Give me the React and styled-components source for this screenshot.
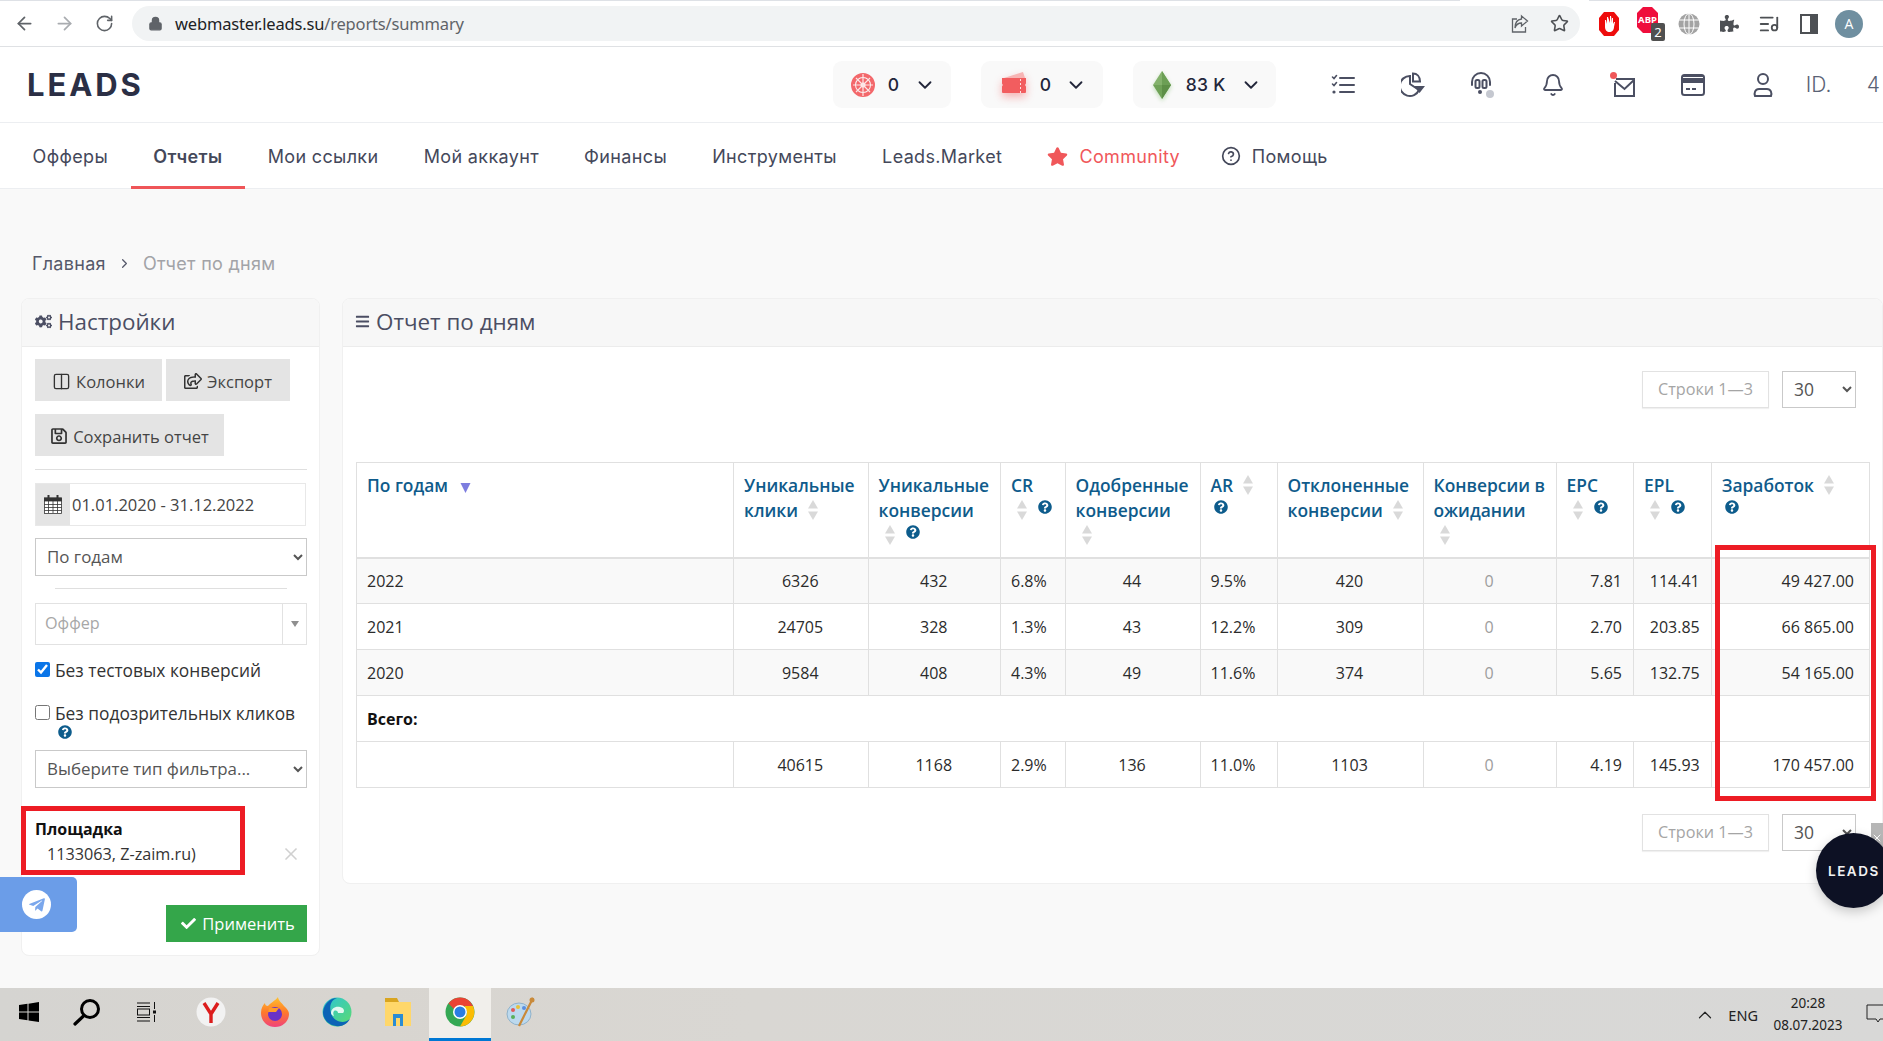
import React from "react";
import styled, { createGlobalStyle } from "styled-components";
import { ArrowLeft, ArrowRight, RotateCw, Lock, Star, ListMusic, ChevronDown, Bell, ChevronRight, CircleHelp, X, ChevronUp, Columns2 } from "lucide-react";
import { FaCogs, FaBars, FaRegShareSquare, FaRegSave, FaCheck, FaQuestionCircle, FaTelegramPlane, FaStar, FaPuzzlePiece } from "react-icons/fa";

const Global = createGlobalStyle`
  html, body { margin: 0; padding: 0; background: #f9f9f9; }
  * { box-sizing: border-box; }
  body { font-family: "Open Sans", "Noto Sans", sans-serif; }
`;

const Page = styled.div`
  position: relative; width: 1883px; height: 1041px; overflow: hidden;
  display: flex; flex-direction: column; background: #f9f9f9;
`;

/* ---------- browser chrome ---------- */
const BrowserBar = styled.div`
  height: 47px; flex: none; display: flex; align-items: center; background: #fff;
  border-bottom: 1px solid #dfe1e4; padding: 1px 0 0 4px;
  background-image: linear-gradient(90deg, #dee1e6 1460px, #fff 1460px, #fff 1589px, #dee1e6 1589px);
  background-size: 100% 1px; background-repeat: no-repeat;
`;
const NavCtl = styled.span`
  width: 40px; height: 40px; flex: none; display: flex; align-items: center; justify-content: center;
  color: ${p => p.$off ? "#a9acb0" : "#5f6368"};
`;
const UrlPill = styled.div`
  margin-left: 8px; width: 1448px; height: 35px; border-radius: 18px; background: #f1f3f4;
  display: flex; align-items: center; padding-left: 16px; flex: none;
`;
const UrlText = styled.div`
  margin-left: 12px; font-family: "Noto Sans", sans-serif; font-size: 16.5px; color: #202124; letter-spacing: -.17px;
  span { color: #5f6368; }
`;
const UrlActions = styled.div`
  margin-left: auto; margin-right: 11px; display: flex; align-items: center; gap: 19px; color: #5f6368;
  & > svg:first-child { margin-right: 1px; }
`;
const Extensions = styled.div`
  display: flex; margin-left: 9px; align-items: center;
`;
const Ext = styled.span`
  width: 40px; height: 40px; display: flex; align-items: center; justify-content: center; color: #4d5054;
`;
const Avatar = styled.span`
  width: 28px; height: 28px; border-radius: 50%; background: #6f8fa0; color: #fff; font-size: 14px;
  display: flex; align-items: center; justify-content: center;
`;

/* ---------- site header ---------- */
const Header = styled.header`
  height: 76px; flex: none; background: #fff; border-bottom: 1px solid #eceef1;
  display: flex; align-items: center; position: relative; padding-left: 27px; overflow: hidden;
`;
const Logo = styled.div`
  font-family: Inter, sans-serif; font-weight: 700; font-size: 31px; letter-spacing: 2.9px; color: #2b2f45; line-height: 1;
`;
const Pill = styled.div`
  height: 47px; width: ${p => p.$w}px; margin-left: ${p => p.$ml}px; border-radius: 9px; background: #f9f9f9; flex: none;
  display: flex; align-items: center; padding-left: ${p => p.$pl}px;
  font-family: Inter, sans-serif; font-size: 17.5px; font-weight: 500; color: #22263a; letter-spacing: .3px;
`;
const PillValue = styled.span`
  margin: 0 ${p => p.$gap}px 0 ${p => p.$left}px; white-space: nowrap;
`;
const IconRow = styled.div`
  display: flex; margin-left: 32px; flex: none; color: #4b4f62;
`;
const HeaderIcon = styled.span`
  width: 70px; height: 40px; display: flex; align-items: center; justify-content: center;
`;
const UserId = styled.div`
  margin-left: 8px; font-family: Inter, sans-serif; font-size: 21px; font-weight: 300; color: #5a6275; white-space: nowrap; flex: none;
`;

/* ---------- site navigation ---------- */
const SiteNav = styled.nav`
  height: 66px; flex: none; background: #fff; border-bottom: 1px solid #eceef1;
  display: flex; padding-left: 10px;
  font-family: Inter, sans-serif; font-size: 18px; color: #44485a;
`;
const Tab = styled.a`
  height: 66px; padding: 3px ${p => p.$pad || 22.6}px 0; display: flex; align-items: center; gap: 11px; white-space: nowrap; letter-spacing: .35px;
  color: ${p => p.$accent ? "#f0575a" : "#44485a"};
  font-weight: ${p => p.$active ? 600 : 400};
  border-bottom: 3px solid ${p => p.$active ? "#ef5558" : "transparent"};
`;

/* ---------- breadcrumb ---------- */
const Crumbs = styled.div`
  flex: none; height: 24px; margin: 62px 0 23px 32px; display: flex; align-items: center; gap: 11px;
  font-family: Inter, sans-serif; font-size: 18px; letter-spacing: .3px; color: #55586a;
`;
const CrumbHere = styled.span` color: #a2a3a7; `;

/* ---------- cards ---------- */
const Content = styled.div`
  display: flex; gap: 22px; align-items: flex-start; padding-left: 21px; flex: none;
`;
const Card = styled.section`
  background: #fff; border: 1px solid #f0f0f0; border-radius: 8px; overflow: hidden;
  ${p => p.$w ? `width: ${p.$w}px; flex: none;` : "flex: 1;"}
`;
const CardHead = styled.div`
  height: 48px; background: #f7f7f7; border-bottom: 1px solid #ececec;
  display: flex; align-items: center; padding: 0 0 2px ${p => p.$pl}px; gap: 6px;
  font-size: 22.4px; color: #4b4e63;
  svg { font-size: ${p => p.$ic}px; }
`;
const SideBody = styled.div` padding: 12px 12px 13px 13px; `;
const BtnRow = styled.div` display: flex; gap: 4px; margin-bottom: 13px; `;
const GreyBtn = styled.button`
  height: 42px; border: 0; background: #e4e4e4; color: #444; padding: 2px 0 0;
  display: flex; align-items: center; gap: 5px; font: 16.5px "Open Sans", sans-serif; width: ${p => p.$w}px;
  justify-content: center; flex: none;
  svg { font-size: 18px; color: #333; }
`;
const Rule = styled.hr`
  border: 0; height: 1px; background: #dfdfdf; margin: ${p => p.$mt || 0}px ${p => p.$inset || 0}px ${p => p.$mb}px;
`;
const DateField = styled.div`
  height: 43px; width: 271px; border: 1px solid #e8e8e8; display: flex; align-items: center;
  margin-bottom: 12px; font-size: 16.5px; color: #444;
`;
const DateAddon = styled.span`
  width: 34px; height: 100%; background: #e4e4e4; display: flex; align-items: center; justify-content: center; margin-right: 2px;
`;
const NativeSelect = styled.select`
  display: block; width: ${p => p.$w || 272}px; height: ${p => p.$h || 38}px; border: 1.5px solid #c9c9c9; background: #fff; color: #555;
  font: ${p => p.$fs || 16.9}px "Open Sans", sans-serif; padding: 0 0 2px 7px; border-radius: 0; outline: 0; margin-top: ${p => p.$mt || 0}px;
`;
const ComboBox = styled.div`
  height: 42px; border: 1px solid #e2e2e2; display: flex; color: #a7a7a7; font-size: 16.2px; align-items: center;
  padding-left: 9px;
`;
const ComboText = styled.span` margin-top: -2px; `;
const ComboCaret = styled.span`
  margin-left: auto; width: 24px; height: 100%; border-left: 1px solid #e2e2e2; display: flex; align-items: center; justify-content: center;
  &::after { content: ""; border: 4.5px solid transparent; border-top: 6px solid #8f8f8f; border-bottom: 0; }
`;
const CheckLine = styled.label`
  display: flex; gap: 5px; align-items: flex-start; font-size: 17.35px; line-height: 24px; color: #333; white-space: nowrap;
  margin-top: ${p => p.$mt}px; min-height: 24px;
  input { width: 15px; height: 15px; margin: 4px 0 0; accent-color: #0a75e8; flex: none; }
`;
const HelpMark = styled(FaQuestionCircle)`
  color: #0d5c8c; font-size: 14px; display: inline-block;
`;
const HelpLine = styled.span` display: block; height: 12px; margin-left: 23px; line-height: 12px; `;
const FilterTitle = styled.div` margin-top: 29px; font-size: 16px; font-weight: 700; color: #111; line-height: 24px; `;
const FilterRow = styled.div`
  display: flex; justify-content: space-between; align-items: center; padding: 1px 6px 0 12px; line-height: 24px; font-size: 16.2px; color: #333;
`;
const FilterClear = styled(X)` color: #d0d0d0; `;
const ApplyRow = styled.div` display: flex; justify-content: flex-end; margin-top: 39px; `;
const ApplyBtn = styled.button`
  width: 141px; height: 37px; border: 0; background: #34a64a; color: #fff; font: 16.5px "Open Sans", sans-serif;
  display: flex; align-items: center; justify-content: center; gap: 6px; padding: 0 0 0 3px;
`;

/* ---------- report ---------- */
const ReportBody = styled.div` padding: 24px 13px 32px 13px; `;
const Pager = styled.div`
  display: flex; justify-content: flex-end; gap: 13px; padding-right: 13px; margin: ${p => p.$mt || 0}px 0 ${p => p.$mb || 0}px;
`;
const RowsInfo = styled.div`
  width: 127px; height: 37px; border: 1px solid #e2e2e2; box-shadow: 0 1px 1px rgba(0,0,0,.06);
  display: flex; align-items: center; justify-content: center; color: #a5a5a5; font-size: 16.2px; padding-bottom: 2px;
`;
const Table = styled.table`
  width: 1513px; table-layout: fixed; border-collapse: collapse; font-size: 16px; color: #2b2b2b;
`;
const Th = styled.th`
  height: 95px; vertical-align: top; text-align: left; padding: 10px 0 0 10px; border: 1px solid #e0e0e0; border-bottom-width: 2px;
  font-weight: 600; line-height: 25px; color: #0f5b8b; font-size: 17.4px; white-space: nowrap;
`;
const Td = styled.td`
  height: 46px; padding: 0 ${p => p.$pr || 11}px 0 10px; border: 1px solid #e0e0e0;
  text-align: ${p => p.$a || "center"}; color: ${p => p.$muted ? "#9d9d9d" : "#2b2b2b"};
  ${p => p.$strong && "font-weight: 700; color: #111;"}
`;
const Tr = styled.tr` background: ${p => p.$zebra ? "#f9f9f9" : "#fff"}; `;
const SortIcon = styled.svg`
  display: inline-block; vertical-align: -3px; margin-left: ${p => p.$ml ?? 9}px; 
`;
const ThHelp = styled(HelpMark)`
  vertical-align: 3px; margin-left: ${p => p.$ml ?? 10}px; 
`;

/* ---------- overlays ---------- */
const RedBox = styled.div`
  position: absolute; border: 5px solid #ed1c24; pointer-events: none;
  left: ${p => p.$x}px; top: ${p => p.$y}px; width: ${p => p.$w}px; height: ${p => p.$h}px;
`;
const TelegramTab = styled.div`
  position: absolute; left: 0; top: 877px; width: 77px; height: 55px; background: #6b9de8; border-radius: 0 5px 5px 0;
  display: flex; align-items: center; justify-content: center; padding-right: 4px;
`;
const TelegramDisc = styled.span`
  width: 29px; height: 29px; border-radius: 50%; background: #fff; color: #7ba7ec; display: flex; align-items: center; justify-content: center; font-size: 18px;
`;
const ChatClose = styled.div`
  position: absolute; left: 1871px; top: 823px; width: 12px; height: 30px; background: #b6b6b6; color: #fff;
  display: flex; align-items: center; justify-content: center; overflow: hidden;
`;
const ChatBubble = styled.div`
  position: absolute; left: 1816px; top: 833px; width: 75px; height: 75px; border-radius: 50%; background: #0d1124;
  color: #f1f1f1; font-family: Inter, sans-serif; font-weight: 600; font-size: 13.5px; letter-spacing: 1.5px;
  display: flex; align-items: center; padding-left: 12px; box-shadow: 0 4px 12px rgba(0,0,0,.2);
`;

/* ---------- windows taskbar ---------- */
const Taskbar = styled.footer`
  margin-top: auto; height: 53px; flex: none; display: flex; align-items: center;
  background: linear-gradient(90deg, #d5d4d1 0%, #d8d5d0 20%, #d9d7d3 40%, #d8d8d7 100%);
`;
const TaskItem = styled.span`
  width: ${p => p.$w || 61.5}px; height: 53px; flex: none; display: flex; align-items: center; justify-content: center;
  padding: 0 ${p => p.$pr || 0}px 5px 0;
  ${p => p.$on && "background: #f1efeb; border-bottom: 3px solid #0078d4; padding-bottom: 2px;"}
`;
const Tray = styled.div`
  margin-left: auto; display: flex; align-items: center; font-family: "Noto Sans", sans-serif; font-size: 14px; color: #222;
`;
const Lang = styled.span` margin: 0 14px 0 12px; font-size: 14.5px; `;
const Clock = styled.div` width: 72px; text-align: center; font-size: 13.5px; line-height: 22px; margin: 0 22px 2px 0; `;
const Notice = styled.svg` margin: 0 -7px 2px 0; `;

/* ---------- drawings ---------- */
const Sort = ({ ml }) => (
  <SortIcon $ml={ml} width="12" height="20" viewBox="0 0 12 20">
    <path d="M6 0l5 8.500H1z" fill="#d9d9d9" /><path d="M6 20l-5-8.500h10z" fill="#d9d9d9" />
  </SortIcon>
);
const DownMark = () => (
  <SortIcon $ml={12} width="11" height="10" viewBox="0 0 11 10" style={{ verticalAlign: -1 }}>
    <path d="M5.500 10L.5 0h10z" fill="#7d7ddf" />
  </SortIcon>
);
const CalendarGlyph = () => (
  <svg width="18" height="19" viewBox="0 0 18 19" fill="none" stroke="#333" strokeWidth=".8">
    <rect x=".5" y="3" width="17" height="15.500" fill="#fff" stroke="#333" />
    <rect x=".5" y="3" width="17" height="3" fill="#333" />
    <path d="M.5 9.500h17M.5 12.500h17M.5 15.500h17M4.500 6v12M9 6v12M13.500 6v12" />
    <path d="M4.500 0v4M13.500 0v4" strokeWidth="2" stroke="#333" />
  </svg>
);
const ShareGlyph = () => (
  <svg width="20" height="20" viewBox="0 0 20 20" fill="none" stroke="#5f6368" strokeWidth="1.3">
    <path d="M7 5H2.500v13h13v-5" /><path d="M11.500 2l6 5-6 5V9C8 9 6 11 5 14c0-5 2.500-8.500 6.500-9z" />
  </svg>
);
const OperaStop = () => (
  <svg width="22" height="26" viewBox="0 0 22 26">
    <path d="M6 1h10l5 6v12l-5 6H6l-5-6V7z" fill="#ee0c0c" />
    <path d="M7 9v7c0 3 2 5 4.500 5S16 19 16 16l1-5h-1l-1 2V7h-1v5l-1-7h-1v7L10 6H9v7L8 9z" fill="#fff" />
  </svg>
);
const AbpMark = () => (
  <svg width="34" height="36" viewBox="-4 0 34 36">
    <path d="M7 1h9l6 6v14l-6 6H7l-6-6V7z" fill="#ef0e3c" />
    <text x="11.500" y="17" textAnchor="middle" fontSize="9.500" fontWeight="700" fill="#fff" fontFamily="Noto Sans">ABP</text>
    <rect x="15" y="17" width="14" height="18" rx="2" fill="#505050" />
    <text x="22" y="31" textAnchor="middle" fontSize="13" fill="#fff" fontFamily="Noto Sans">2</text>
  </svg>
);
const GlobeMark = () => (
  <svg width="22" height="24" viewBox="0 0 22 24" fill="none" stroke="#fff" strokeWidth="1">
    <circle cx="11" cy="12" r="10.500" fill="#a3a3a3" stroke="none" />
    <ellipse cx="11" cy="12" rx="5" ry="10.500" /><path d="M11 1.500v21M1 8h20M1 16h20" />
  </svg>
);
const PanelMark = () => (
  <svg width="18" height="20" viewBox="0 0 18 20"><rect x="0" y="0" width="18" height="20" fill="#4d5054" /><rect x="2" y="2" width="8" height="16" fill="#fff" /></svg>
);
const WheelIcon = () => (
  <svg width="24" height="26" viewBox="0 0 24 26" fill="none">
    <circle cx="12" cy="13" r="10" stroke="#f3686b" strokeWidth="4" />
    <circle cx="12" cy="13" r="7" fill="#f3686b" />
    <circle cx="12" cy="13" r="2.500" fill="#fff" />
    <path d="M12 2v22M2 13h20M5 6l14 14M19 6L5 20" stroke="#fde5e5" strokeWidth="1.200" />
  </svg>
);
const TicketIcon = () => (
  <svg width="32" height="36" viewBox="0 0 32 36" style={{ filter: "drop-shadow(0 4px 4px rgba(242,93,95,.45))" }}>
    <path d="M6 11L25 5l2 6z" fill="#f7b4b4" />
    <path d="M4 11h24v5.500a2 2 0 0 0 0 3V25a1 1 0 0 1-1 1H5a1 1 0 0 1-1-1v-5.500a2 2 0 0 0 0-3z" fill="#f25d5f" />
    <path d="M22.500 12v14" stroke="#fde0e0" strokeWidth="1" strokeDasharray="2 2" />
  </svg>
);
const GemIcon = () => (
  <svg width="20" height="30" viewBox="0 0 20 30" style={{ filter: "drop-shadow(0 2px 2px rgba(108,180,85,.4))" }}>
    <path d="M10 1L1 15h18z" fill="#84b26c" /><path d="M10 1v14h9z" fill="#6c9f55" />
    <path d="M10 29L1 15h18z" fill="#6fa257" /><path d="M10 29V15h9z" fill="#5d8f47" />
  </svg>
);
const ChecklistIcon = () => (
  <svg width="24" height="22" viewBox="0 0 24 22" fill="none" stroke="#4b4f62" strokeWidth="2" strokeLinecap="round">
    <path d="M9 4h14M9 11h14M9 18h14" /><path d="M1.500 3l1.500 1.500L5.500 1.500M1.500 10l1.500 1.500 2.500-3" strokeWidth="1.600" />
    <circle cx="3" cy="18" r="1.600" fill="#4b4f62" stroke="none" />
  </svg>
);
const PieIcon = () => (
  <svg width="24" height="26" viewBox="0 0 24 26" fill="none" stroke="#4b4f62" strokeWidth="2">
    <path d="M9 4a10 10 0 1 0 9 14l-9-6z" /><path d="M12 1.500c4 0 7 3 7 8h-7z" />
    <path d="M13 14h11l-5.500 7z" fill="#4b4f62" stroke="none" />
  </svg>
);
const HeadsetIcon = () => (
  <svg width="28" height="30" viewBox="0 0 28 30" fill="none" stroke="#4b4f62" strokeWidth="2" strokeLinecap="round">
    <path d="M3 15v-3a9 9 0 0 1 18 0v3" />
    <rect x="6.500" y="10" width="4" height="8" rx="1.500" /><rect x="13.500" y="10" width="4" height="8" rx="1.500" />
    <circle cx="11" cy="22" r="2" fill="#4b4f62" stroke="none" />
    <circle cx="21" cy="24" r="4" fill="#c5c8d0" stroke="none" />
  </svg>
);
const MailDotIcon = () => (
  <svg width="26" height="28" viewBox="0 0 26 28" fill="none" stroke="#4b4f62" strokeWidth="2">
    <path d="M6 8h18v17H5V12" /><path d="M5 10l9.500 8L24 9" />
    <circle cx="3.500" cy="4.500" r="3.500" fill="#f0575a" stroke="none" />
  </svg>
);
const CardIcon = () => (
  <svg width="24" height="22" viewBox="0 0 24 22">
    <rect x="1" y="1" width="22" height="20" rx="2.500" fill="none" stroke="#4b4f62" strokeWidth="2" />
    <rect x="1" y="4" width="22" height="5" fill="#4b4f62" /><rect x="1" y="1" width="22" height="2" fill="#4b4f62" />
    <rect x="5" y="14" width="4" height="2" fill="#4b4f62" /><rect x="11" y="14" width="4" height="2" fill="#4b4f62" />
  </svg>
);
const PersonIcon = () => (
  <svg width="22" height="26" viewBox="0 0 22 26" fill="none" stroke="#4b4f62" strokeWidth="2">
    <circle cx="11" cy="7" r="5" /><path d="M3 24h16c1-3 0-7-4-7H7c-4 0-5 4-4 7z" />
  </svg>
);
const WinLogo = () => (
  <svg width="20" height="20" viewBox="0 0 20 20" fill="#000"><path d="M0 3l8.500-1.200V9.500H0zM9.500 1.700L20 0v9.500H9.500zM0 10.500h8.500v7.700L0 17zM9.500 10.500H20V20L9.500 18.400z" /></svg>
);
const SearchGlyph = () => (
  <svg width="28" height="28" viewBox="0 0 28 28" fill="none" stroke="#000"><circle cx="17" cy="11" r="8.500" strokeWidth="3" /><path d="M11 17.500L2 26" strokeWidth="3.200" strokeLinecap="round" /></svg>
);
const TaskViewGlyph = () => (
  <svg width="20" height="20" viewBox="0 0 20 20" fill="none" stroke="#111"><path d="M0 1h13M0 4.500h13M0 15.500h13M0 19h13" /><rect x=".5" y="7" width="12" height="6" /><path d="M17.500 0v7M17.500 13v7" /><rect x="16" y="8.500" width="3" height="3" fill="#111" stroke="none" /></svg>
);
const YandexGlyph = () => (
  <svg width="30" height="30" viewBox="0 0 30 30"><circle cx="15" cy="15" r="14.500" fill="#f2f2f2" /><path d="M8 6l7 11v9M22 6l-7 11" stroke="#dc1c1c" strokeWidth="3.400" fill="none" /></svg>
);
const FoxGlyph = () => (
  <svg width="30" height="32" viewBox="0 0 30 32">
    <defs><linearGradient id="fx" x1="0" y1="0" x2="0" y2="1"><stop offset="0" stopColor="#ffc22e" /><stop offset=".5" stopColor="#ff7a2a" /><stop offset="1" stopColor="#f0427c" /></linearGradient></defs>
    <path d="M15 31C7 31 1 25 1 17c0-5 2-8 4-10 0 2 1 3 3 3 2-3 7-5 10-9 0 3 3 5 6 9 3 3 5 5 5 8 0 7-6 13-14 13z" fill="url(#fx)" />
    <circle cx="15" cy="18" r="7" fill="#6a32c8" /><path d="M9 12h10l-3 4H8z" fill="#ff9a2a" />
  </svg>
);
const EdgeGlyph = () => (
  <svg width="30" height="30" viewBox="0 0 30 30">
    <defs><linearGradient id="eg" x1="0" y1="0" x2="1" y2="1"><stop offset="0" stopColor="#2bc4d8" /><stop offset="1" stopColor="#5ddb6e" /></linearGradient></defs>
    <circle cx="15" cy="15" r="14.500" fill="url(#eg)" />
    <path d="M1 15C2 7 8 1 15 1c-6 2-8 8-6 15 2 8 12 12 19 6-3 5-8 8-14 7C7 28 1 23 1 15z" fill="#0c63b6" />
    <path d="M9 16c0-4 4-7 9-6 4 1 5 4 3 6h-5c0-2-2-3-4-2-1 1-1 3 0 5-2-.5-3-2-3-3z" fill="#fff" opacity=".85" />
  </svg>
);
const FolderGlyph = () => (
  <svg width="28" height="30" viewBox="0 0 28 30">
    <path d="M1 1h12l2 4H1z" fill="#d9a520" /><rect x="1" y="5" width="26" height="24" fill="#ffd76a" />
    <path d="M9 29V17h10v12h-3v-8h-4v8z" fill="#2a8cd4" />
  </svg>
);
const ChromeGlyph = () => (
  <svg width="30" height="30" viewBox="0 0 30 30">
    <circle cx="15" cy="15" r="14.500" fill="#34a853" />
    <path d="M15 .5A14.500 14.500 0 0 1 28 9H15a6 6 0 0 0-5.500 3.500L3.500 6.500A14.500 14.500 0 0 1 15 .5z" fill="#ea4335" />
    <path d="M28 9a14.500 14.500 0 0 1-13 20.500L21 19a6 6 0 0 0-1-7.500V9z" fill="#fbbc04" />
    <circle cx="15" cy="15" r="7" fill="#fff" /><circle cx="15" cy="15" r="5.500" fill="#2a7de1" />
  </svg>
);
const PaintGlyph = () => (
  <svg width="30" height="32" viewBox="0 0 30 32">
    <ellipse cx="13" cy="18" rx="12" ry="11" fill="#bcd9ee" stroke="#8fb2cb" />
    <circle cx="7" cy="14" r="2" fill="#e05a5a" /><circle cx="12" cy="11" r="2" fill="#e8c23a" /><circle cx="7" cy="21" r="2" fill="#58b05a" /><circle cx="18" cy="12" r="2" fill="#5a8ee0" />
    <path d="M27 2L13 30" stroke="#c98a3a" strokeWidth="2.200" /><circle cx="26" cy="4" r="2.500" fill="#c98a3a" />
  </svg>
);

const rows = [
  ["2022", "6326", "432", "6.8%", "44", "9.5%", "420", "0", "7.81", "114.41", "49 427.00"],
  ["2021", "24705", "328", "1.3%", "43", "12.2%", "309", "0", "2.70", "203.85", "66 865.00"],
  ["2020", "9584", "408", "4.3%", "49", "11.6%", "374", "0", "5.65", "132.75", "54 165.00"],
];
const total = ["", "40615", "1168", "2.9%", "136", "11.0%", "1103", "0", "4.19", "145.93", "170 457.00"];
const widths = [377, 134.5, 132.5, 64.5, 135, 77, 146, 133, 77.5, 77.7, 158.3];
const aligns = ["left", "center", "center", "left", "center", "left", "center", "center", "right", "right", "right"];

const DataRow = ({ cells, zebra }) => (
  <Tr $zebra={zebra}>
    {cells.map((c, i) => (
      <Td key={i} $a={aligns[i]} $muted={i === 7} $pr={i === 10 ? 15 : 11}>{c}</Td>
    ))}
  </Tr>
);

const PageRow = ({ mt, mb }) => (
  <Pager $mt={mt} $mb={mb}>
    <RowsInfo>Строки 1—3</RowsInfo>
    <NativeSelect $w={74} $h={37} $fs={17.5} defaultValue="30"><option>30</option><option>50</option></NativeSelect>
  </Pager>
);

export default function App() {
  return (
    <Page>
      <Global />
      <BrowserBar>
        <NavCtl><ArrowLeft size={21} /></NavCtl>
        <NavCtl $off><ArrowRight size={21} /></NavCtl>
        <NavCtl><RotateCw size={19} /></NavCtl>
        <UrlPill>
          <Lock size={15} fill="#5f6368" color="#5f6368" />
          <UrlText>webmaster.leads.su<span>/reports/summary</span></UrlText>
          <UrlActions><ShareGlyph /><Star size={19} color="#4d5054" /></UrlActions>
        </UrlPill>
        <Extensions>
          <Ext><OperaStop /></Ext>
          <Ext><AbpMark /></Ext>
          <Ext><GlobeMark /></Ext>
          <Ext><FaPuzzlePiece size={19} /></Ext>
          <Ext><ListMusic size={22} /></Ext>
          <Ext><PanelMark /></Ext>
          <Ext><Avatar>A</Avatar></Ext>
        </Extensions>
      </BrowserBar>

      <Header>
        <Logo>LEADS</Logo>
        <Pill $w={118} $ml={689} $pl={18}>
          <WheelIcon /><PillValue $left={13} $gap={15}>0</PillValue><ChevronDown size={22} />
        </Pill>
        <Pill $w={122} $ml={30} $pl={17}>
          <TicketIcon /><PillValue $left={10} $gap={14}>0</PillValue><ChevronDown size={22} />
        </Pill>
        <Pill $w={143} $ml={30} $pl={19}>
          <GemIcon /><PillValue $left={14} $gap={14}>83 K</PillValue><ChevronDown size={22} />
        </Pill>
        <IconRow>
          <HeaderIcon><ChecklistIcon /></HeaderIcon>
          <HeaderIcon><PieIcon /></HeaderIcon>
          <HeaderIcon><HeadsetIcon /></HeaderIcon>
          <HeaderIcon><Bell size={24} strokeWidth={1.8} /></HeaderIcon>
          <HeaderIcon><MailDotIcon /></HeaderIcon>
          <HeaderIcon><CardIcon /></HeaderIcon>
          <HeaderIcon><PersonIcon /></HeaderIcon>
        </IconRow>
        <UserId>ID.&nbsp;&nbsp;&nbsp;&nbsp;&nbsp;&nbsp;4</UserId>
      </Header>

      <SiteNav>
        <Tab>Офферы</Tab>
        <Tab $active>Отчеты</Tab>
        <Tab>Мои ссылки</Tab>
        <Tab>Мой аккаунт</Tab>
        <Tab>Финансы</Tab>
        <Tab>Инструменты</Tab>
        <Tab>Leads.Market</Tab>
        <Tab $accent><FaStar size={21} color="#f0575a" />Community</Tab>
        <Tab $pad={18}><CircleHelp size={20} />Помощь</Tab>
      </SiteNav>

      <Crumbs>
        <span>Главная</span><ChevronRight size={15} /><CrumbHere>Отчет по дням</CrumbHere>
      </Crumbs>

      <Content>
        <Card $w={299}>
          <CardHead $pl={13} $ic={17}><FaCogs />Настройки</CardHead>
          <SideBody>
            <BtnRow>
              <GreyBtn $w={127}><Columns2 size={19} strokeWidth={1.7} />Колонки</GreyBtn>
              <GreyBtn $w={124}><FaRegShareSquare />Экспорт</GreyBtn>
            </BtnRow>
            <BtnRow>
              <GreyBtn $w={189}><FaRegSave />Сохранить отчет</GreyBtn>
            </BtnRow>
            <Rule $mb={13} />
            <DateField><DateAddon><CalendarGlyph /></DateAddon>01.01.2020 - 31.12.2022</DateField>
            <NativeSelect defaultValue="y"><option value="y">По годам</option></NativeSelect>
            <Rule $inset={20} $mt={12} $mb={14} />
            <ComboBox><ComboText>Оффер</ComboText><ComboCaret /></ComboBox>
            <CheckLine $mt={13}><input type="checkbox" defaultChecked />Без тестовых конверсий</CheckLine>
            <CheckLine $mt={19}><input type="checkbox" />Без подозрительных кликов</CheckLine>
            <HelpLine><HelpMark /></HelpLine>
            <NativeSelect $mt={13} defaultValue="f"><option value="f">Выберите тип фильтра...</option></NativeSelect>
            <FilterTitle>Площадка</FilterTitle>
            <FilterRow>1133063, Z-zaim.ru)<FilterClear size={20} /></FilterRow>
            <ApplyRow><ApplyBtn><FaCheck size={15} />Применить</ApplyBtn></ApplyRow>
          </SideBody>
        </Card>

        <Card>
          <CardHead $pl={12} $ic={15}><FaBars />Отчет по дням</CardHead>
          <ReportBody>
            <PageRow mb={54} />
            <Table>
              <colgroup>{widths.map((w, i) => <col key={i} style={{ width: w }} />)}</colgroup>
              <thead>
                <tr>
                  <Th>По годам<DownMark /></Th>
                  <Th>Уникальные<br />клики<Sort /></Th>
                  <Th>Уникальные<br />конверсии<br /><Sort ml={5} /><ThHelp /></Th>
                  <Th>CR<br /><Sort ml={5} /><ThHelp /></Th>
                  <Th>Одобренные<br />конверсии<br /><Sort ml={5} /></Th>
                  <Th>AR<Sort /><br /><ThHelp $ml={3} /></Th>
                  <Th>Отклоненные<br />конверсии<Sort /></Th>
                  <Th>Конверсии в<br />ожидании<br /><Sort ml={5} /></Th>
                  <Th>EPC<br /><Sort ml={5} /><ThHelp /></Th>
                  <Th>EPL<br /><Sort ml={5} /><ThHelp /></Th>
                  <Th>Заработок<Sort /><br /><ThHelp $ml={3} /></Th>
                </tr>
              </thead>
              <tbody>
                <DataRow cells={rows[0]} zebra />
                <DataRow cells={rows[1]} />
                <DataRow cells={rows[2]} zebra />
                <Tr><Td colSpan={11} $a="left" $strong>Всего:</Td></Tr>
                <DataRow cells={total} />
              </tbody>
            </Table>
            <PageRow mt={26} />
          </ReportBody>
        </Card>
      </Content>

      <Taskbar>
        <TaskItem $w={57}><WinLogo /></TaskItem>
        <TaskItem $w={60}><SearchGlyph /></TaskItem>
        <TaskItem $w={66} $pr={6}><TaskViewGlyph /></TaskItem>
        <TaskItem $pr={5}><YandexGlyph /></TaskItem>
        <TaskItem><FoxGlyph /></TaskItem>
        <TaskItem><EdgeGlyph /></TaskItem>
        <TaskItem><FolderGlyph /></TaskItem>
        <TaskItem $on><ChromeGlyph /></TaskItem>
        <TaskItem><PaintGlyph /></TaskItem>
        <Tray>
          <ChevronUp size={22} strokeWidth={1.3} />
          <Lang>ENG</Lang>
          <Clock>20:28<br />08.07.2023</Clock>
          <Notice width="24" height="20" viewBox="0 0 24 20" fill="none" stroke="#222"><path d="M1 1h22v14H14l-2 3-2-3H1z" /></Notice>
        </Tray>
      </Taskbar>

      <RedBox $x={21} $y={806} $w={224} $h={69} />
      <RedBox $x={1715} $y={545} $w={161} $h={256} />
      <TelegramTab><TelegramDisc><FaTelegramPlane /></TelegramDisc></TelegramTab>
      <ChatClose><X size={14} /></ChatClose>
      <ChatBubble>LEADS</ChatBubble>
    </Page>
  );
}
